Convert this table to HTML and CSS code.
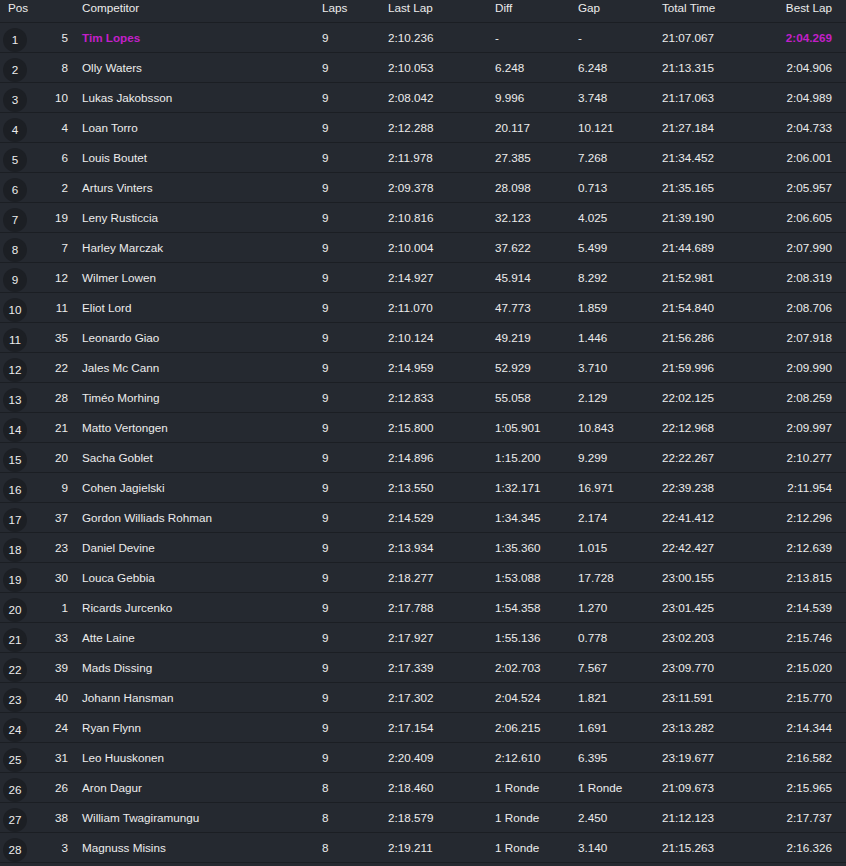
FILE: index.html
```html
<!DOCTYPE html>
<html>
<head>
<meta charset="utf-8">
<link rel="stylesheet" href="styles.css">
</head>
<body>
<table class="results">
  <colgroup>
    <col class="c-pos"><col class="c-num"><col class="c-name"><col class="c-laps"><col class="c-last"><col class="c-diff"><col class="c-gap"><col class="c-total"><col class="c-best">
  </colgroup>
  <thead>
    <tr>
      <th>Pos</th><th></th><th>Competitor</th><th>Laps</th><th>Last Lap</th><th>Diff</th><th>Gap</th><th>Total Time</th><th class="best">Best Lap</th>
    </tr>
  </thead>
  <tbody>
    <tr class="leader"><td class="pos"><span>1</span></td><td class="num">5</td><td class="name">Tim Lopes</td><td>9</td><td>2:10.236</td><td>-</td><td>-</td><td>21:07.067</td><td class="best">2:04.269</td></tr>
    <tr><td class="pos"><span>2</span></td><td class="num">8</td><td class="name">Olly Waters</td><td>9</td><td>2:10.053</td><td>6.248</td><td>6.248</td><td>21:13.315</td><td class="best">2:04.906</td></tr>
    <tr><td class="pos"><span>3</span></td><td class="num">10</td><td class="name">Lukas Jakobsson</td><td>9</td><td>2:08.042</td><td>9.996</td><td>3.748</td><td>21:17.063</td><td class="best">2:04.989</td></tr>
    <tr><td class="pos"><span>4</span></td><td class="num">4</td><td class="name">Loan Torro</td><td>9</td><td>2:12.288</td><td>20.117</td><td>10.121</td><td>21:27.184</td><td class="best">2:04.733</td></tr>
    <tr><td class="pos"><span>5</span></td><td class="num">6</td><td class="name">Louis Boutet</td><td>9</td><td>2:11.978</td><td>27.385</td><td>7.268</td><td>21:34.452</td><td class="best">2:06.001</td></tr>
    <tr><td class="pos"><span>6</span></td><td class="num">2</td><td class="name">Arturs Vinters</td><td>9</td><td>2:09.378</td><td>28.098</td><td>0.713</td><td>21:35.165</td><td class="best">2:05.957</td></tr>
    <tr><td class="pos"><span>7</span></td><td class="num">19</td><td class="name">Leny Rusticcia</td><td>9</td><td>2:10.816</td><td>32.123</td><td>4.025</td><td>21:39.190</td><td class="best">2:06.605</td></tr>
    <tr><td class="pos"><span>8</span></td><td class="num">7</td><td class="name">Harley Marczak</td><td>9</td><td>2:10.004</td><td>37.622</td><td>5.499</td><td>21:44.689</td><td class="best">2:07.990</td></tr>
    <tr><td class="pos"><span>9</span></td><td class="num">12</td><td class="name">Wilmer Lowen</td><td>9</td><td>2:14.927</td><td>45.914</td><td>8.292</td><td>21:52.981</td><td class="best">2:08.319</td></tr>
    <tr><td class="pos"><span>10</span></td><td class="num">11</td><td class="name">Eliot Lord</td><td>9</td><td>2:11.070</td><td>47.773</td><td>1.859</td><td>21:54.840</td><td class="best">2:08.706</td></tr>
    <tr><td class="pos"><span>11</span></td><td class="num">35</td><td class="name">Leonardo Giao</td><td>9</td><td>2:10.124</td><td>49.219</td><td>1.446</td><td>21:56.286</td><td class="best">2:07.918</td></tr>
    <tr><td class="pos"><span>12</span></td><td class="num">22</td><td class="name">Jales Mc Cann</td><td>9</td><td>2:14.959</td><td>52.929</td><td>3.710</td><td>21:59.996</td><td class="best">2:09.990</td></tr>
    <tr><td class="pos"><span>13</span></td><td class="num">28</td><td class="name">Timéo Morhing</td><td>9</td><td>2:12.833</td><td>55.058</td><td>2.129</td><td>22:02.125</td><td class="best">2:08.259</td></tr>
    <tr><td class="pos"><span>14</span></td><td class="num">21</td><td class="name">Matto Vertongen</td><td>9</td><td>2:15.800</td><td>1:05.901</td><td>10.843</td><td>22:12.968</td><td class="best">2:09.997</td></tr>
    <tr><td class="pos"><span>15</span></td><td class="num">20</td><td class="name">Sacha Goblet</td><td>9</td><td>2:14.896</td><td>1:15.200</td><td>9.299</td><td>22:22.267</td><td class="best">2:10.277</td></tr>
    <tr><td class="pos"><span>16</span></td><td class="num">9</td><td class="name">Cohen Jagielski</td><td>9</td><td>2:13.550</td><td>1:32.171</td><td>16.971</td><td>22:39.238</td><td class="best">2:11.954</td></tr>
    <tr><td class="pos"><span>17</span></td><td class="num">37</td><td class="name">Gordon Williads Rohman</td><td>9</td><td>2:14.529</td><td>1:34.345</td><td>2.174</td><td>22:41.412</td><td class="best">2:12.296</td></tr>
    <tr><td class="pos"><span>18</span></td><td class="num">23</td><td class="name">Daniel Devine</td><td>9</td><td>2:13.934</td><td>1:35.360</td><td>1.015</td><td>22:42.427</td><td class="best">2:12.639</td></tr>
    <tr><td class="pos"><span>19</span></td><td class="num">30</td><td class="name">Louca Gebbia</td><td>9</td><td>2:18.277</td><td>1:53.088</td><td>17.728</td><td>23:00.155</td><td class="best">2:13.815</td></tr>
    <tr><td class="pos"><span>20</span></td><td class="num">1</td><td class="name">Ricards Jurcenko</td><td>9</td><td>2:17.788</td><td>1:54.358</td><td>1.270</td><td>23:01.425</td><td class="best">2:14.539</td></tr>
    <tr><td class="pos"><span>21</span></td><td class="num">33</td><td class="name">Atte Laine</td><td>9</td><td>2:17.927</td><td>1:55.136</td><td>0.778</td><td>23:02.203</td><td class="best">2:15.746</td></tr>
    <tr><td class="pos"><span>22</span></td><td class="num">39</td><td class="name">Mads Dissing</td><td>9</td><td>2:17.339</td><td>2:02.703</td><td>7.567</td><td>23:09.770</td><td class="best">2:15.020</td></tr>
    <tr><td class="pos"><span>23</span></td><td class="num">40</td><td class="name">Johann Hansman</td><td>9</td><td>2:17.302</td><td>2:04.524</td><td>1.821</td><td>23:11.591</td><td class="best">2:15.770</td></tr>
    <tr><td class="pos"><span>24</span></td><td class="num">24</td><td class="name">Ryan Flynn</td><td>9</td><td>2:17.154</td><td>2:06.215</td><td>1.691</td><td>23:13.282</td><td class="best">2:14.344</td></tr>
    <tr><td class="pos"><span>25</span></td><td class="num">31</td><td class="name">Leo Huuskonen</td><td>9</td><td>2:20.409</td><td>2:12.610</td><td>6.395</td><td>23:19.677</td><td class="best">2:16.582</td></tr>
    <tr><td class="pos"><span>26</span></td><td class="num">26</td><td class="name">Aron Dagur</td><td>8</td><td>2:18.460</td><td>1 Ronde</td><td>1 Ronde</td><td>21:09.673</td><td class="best">2:15.965</td></tr>
    <tr><td class="pos"><span>27</span></td><td class="num">38</td><td class="name">William Twagiramungu</td><td>8</td><td>2:18.579</td><td>1 Ronde</td><td>2.450</td><td>21:12.123</td><td class="best">2:17.737</td></tr>
    <tr><td class="pos"><span>28</span></td><td class="num">3</td><td class="name">Magnuss Misins</td><td>8</td><td>2:19.211</td><td>1 Ronde</td><td>3.140</td><td>21:15.263</td><td class="best">2:16.326</td></tr>
  </tbody>
</table>
</body>
</html>
```

FILE: styles.css
```css
html, body {
  margin: 0;
  padding: 0;
  background: #252930;
}
body {
  font-family: "Liberation Sans", Arial, sans-serif;
  font-size: 11.7px;
  color: #ececec;
}
.results {
  width: 846px;
  table-layout: fixed;
  border-collapse: collapse;
}
.c-pos { width: 40px; }
.c-num { width: 34px; }
.c-name { width: 240px; }
.c-laps { width: 66px; }
.c-last { width: 107px; }
.c-diff { width: 83px; }
.c-gap { width: 84px; }
.c-total { width: 106px; }
.c-best { width: 86px; }

.results th {
  font-weight: normal;
  text-align: left;
  line-height: 16px;
  height: 16px;
  padding: 0 0 6px 8px;
  border-bottom: 1px solid #1b1e23;
}
.results td {
  height: 28px;
  padding: 1px 0 0 8px;
  line-height: 16px;
  border-bottom: 1px solid #1b1e23;
  white-space: nowrap;
}
.results .best {
  text-align: right;
  padding-right: 14px;
}
.results td.num {
  text-align: right;
  padding-right: 6px;
}
.results td.pos {
  padding: 1px 0 0 3px;
}
.pos span {
  display: flex;
  width: 24px;
  height: 24px;
  margin-top: 3px;
  border-radius: 50%;
  background: #1c1f24;
  align-items: center;
  justify-content: center;
}
.leader .name,
.leader .best {
  color: #c21fc8;
  font-weight: bold;
}
```
